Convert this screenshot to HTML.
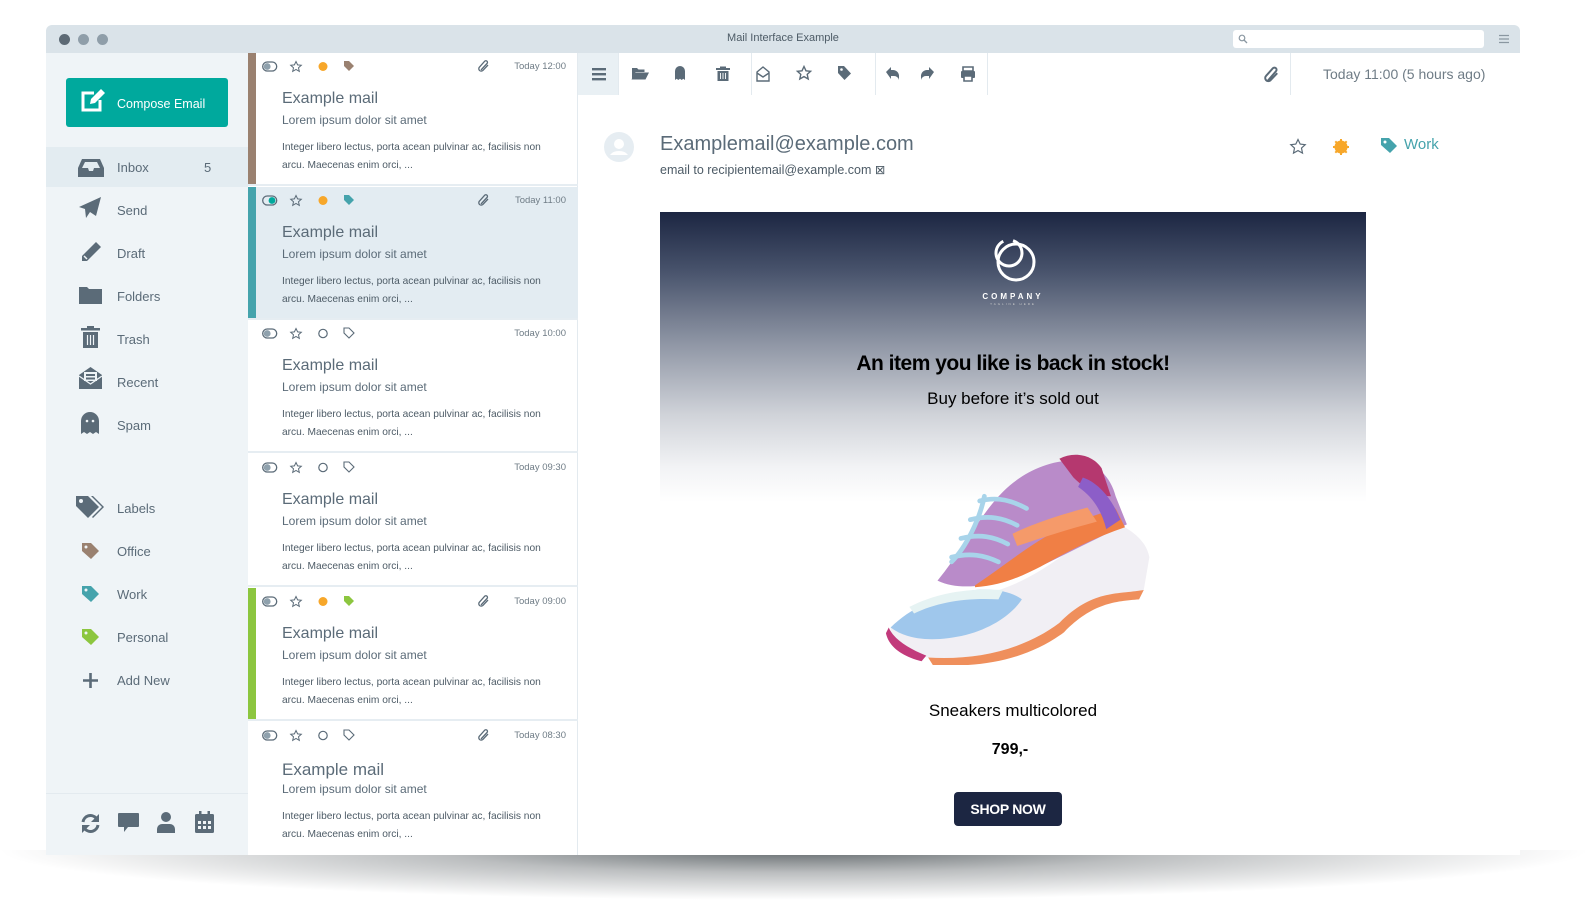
<!DOCTYPE html>
<html><head><meta charset="utf-8"><style>
*{box-sizing:border-box;margin:0;padding:0}
body{width:1588px;height:920px;background:#fff;position:relative;overflow:hidden;font-family:"Liberation Sans",sans-serif;color:#5b6b78}
.abs{position:absolute}
.shadow{position:absolute;left:0;top:850px;width:1588px;height:50px;background:radial-gradient(ellipse 50% 100% at 50% 0%,rgba(70,78,82,.85) 0%,rgba(120,125,128,.5) 45%,rgba(255,255,255,0) 100%)}
.win{position:absolute;left:46px;top:25px;width:1474px;height:830px;background:#fff;overflow:hidden;border-radius:6px 6px 0 0}
.title{position:absolute;left:0;top:0;width:1474px;height:28px;background:#dae3e9}
.dot{position:absolute;top:9px;width:11px;height:11px;border-radius:50%}
.side{position:absolute;left:0;top:28px;width:202px;height:802px;background:#eff4f7}
.nav{position:absolute;left:71px;font-size:13px;color:#5b6b78}
.ico{position:absolute}
.list{position:absolute;left:202px;top:28px;width:330px;height:802px;background:#fff;border-right:1px solid #e3eaef}
.item{position:absolute;left:0;width:330px;height:133px;border-bottom:2px solid #e6edf2}
.bar{position:absolute;left:0;top:0;width:8px;height:100%}
.item .t{position:absolute;left:34px;top:37px;font-size:16px;color:#5b6b78}
.item .s{position:absolute;left:34px;top:60px;font-size:12px;color:#5b6b78}
.item .b{position:absolute;left:34px;top:86px;font-size:10.2px;line-height:18px;color:#4d5b66;width:270px}
.item .tm{position:absolute;right:12px;top:8px;font-size:9.5px;color:#6f7c86}
.read{position:absolute;left:532px;top:28px;width:942px;height:802px;background:#fff}
.tb{position:absolute;top:0;height:42px;border-right:1px solid #e3eaef}
</style></head><body>
<div class="shadow"></div>
<div class="win">
 <div class="title">
  <div class="dot" style="left:13px;background:#5d6a75"></div>
  <div class="dot" style="left:32px;background:#8f9ea9"></div>
  <div class="dot" style="left:51px;background:#8f9ea9"></div>
  <div class="abs" style="left:0;width:1474px;top:7px;text-align:center;font-size:11px;color:#4d5b66">Mail Interface Example</div>
  <div class="abs" style="left:1187px;top:5px;width:251px;height:18px;background:#fff;border-radius:3px"></div>
  <svg class="abs" style="left:1192px;top:9px" width="10" height="10"><circle cx="4" cy="4" r="2.8" fill="none" stroke="#8a97a1" stroke-width="1.2"/><path d="M6 6l3 3" stroke="#8a97a1" stroke-width="1.3"/></svg>
  <svg class="abs" style="left:1453px;top:9px" width="10" height="10"><path d="M0 1.5h10M0 5h10M0 8.5h10" stroke="#8a97a1" stroke-width="1.3"/></svg>
 </div>
 <div class="side">
  <div class="abs" style="left:20px;top:25px;width:162px;height:49px;background:#00a99d;border-radius:3px"></div>
  <svg class="abs" style="left:34px;top:35px" width="26" height="26" viewBox="0 0 26 26"><path d="M14 5H3v17h17V12" fill="none" stroke="#fff" stroke-width="3"/><path d="M10 16l1-5L21 1l4 4-10 10z" fill="#fff"/></svg>
  <div class="abs" style="left:71px;top:44px;font-size:12.5px;color:#fff">Compose Email</div>
  <div class="abs" style="left:0;top:94px;width:202px;height:40px;background:#e3ecf1"></div>
  <svg class="ico" style="left:32px;top:106px" width="26" height="18" viewBox="0 0 26 18"><path d="M4 0h18l4 9v9H0V9z" fill="#5b6b78"/><path d="M4 9l3-6h12l3 6h-6l-1 3h-4l-1-3z" fill="#e3ecf1"/></svg>
  <div class="nav" style="top:107px">Inbox</div><div class="nav" style="left:158px;top:107px">5</div>
  <svg class="ico" style="left:33px;top:144px" width="22" height="22" viewBox="0 0 22 22"><path d="M22 0L0 10l6 2 1 9 4-6 6 4z" fill="#5b6b78"/></svg>
  <div class="nav" style="top:150px">Send</div>
  <svg class="ico" style="left:34px;top:188px" width="22" height="22" viewBox="0 0 22 22"><path d="M16 1l5 5L7 20H2v-5z" fill="#5b6b78"/><path d="M4 15l3 3" stroke="#eff4f7" stroke-width="1.5"/></svg>
  <div class="nav" style="top:193px">Draft</div>
  <svg class="ico" style="left:33px;top:233px" width="23" height="18" viewBox="0 0 23 18"><path d="M0 1h8l2 2h13v15H0z" fill="#5b6b78"/></svg>
  <div class="nav" style="top:236px">Folders</div>
  <svg class="ico" style="left:35px;top:273px" width="19" height="22" viewBox="0 0 19 22"><rect x="0" y="2" width="19" height="2.5" fill="#5b6b78"/><rect x="6" y="0" width="7" height="2" fill="#5b6b78"/><path d="M2 6h15v16H2z" fill="#5b6b78"/><path d="M6.5 9v10M9.5 9v10M12.5 9v10" stroke="#eff4f7" stroke-width="1.2"/></svg>
  <div class="nav" style="top:279px">Trash</div>
  <svg class="ico" style="left:33px;top:314px" width="23" height="22" viewBox="0 0 23 22"><path d="M0 8L11.5 0 23 8v14H0z" fill="#5b6b78"/><rect x="5" y="5" width="13" height="9" fill="#eff4f7"/><rect x="7" y="7" width="9" height="2" fill="#5b6b78"/><rect x="7" y="10.5" width="9" height="2" fill="#5b6b78"/><path d="M0 9l11.5 8L23 9" fill="none" stroke="#eff4f7" stroke-width="1.3"/></svg>
  <div class="nav" style="top:322px">Recent</div>
  <svg class="ico" style="left:35px;top:359px" width="18" height="22" viewBox="0 0 18 22"><path d="M0 9a9 9 0 0118 0v13l-3-2-3 2-3-2-3 2-3-2-3 2z" fill="#5b6b78"/><circle cx="6" cy="9" r="1.3" fill="#eff4f7"/><circle cx="12" cy="9" r="1.3" fill="#eff4f7"/></svg>
  <div class="nav" style="top:365px">Spam</div>
  <svg class="ico" style="left:30px;top:443px" width="29" height="25" viewBox="0 0 29 25"><path d="M0 0h12l11 11-11 11L0 10z" fill="#5b6b78"/><circle cx="5" cy="5" r="2" fill="#eff4f7"/><path d="M15 0h2l11 11-11 11-1-1 10-10z" fill="#5b6b78"/></svg>
  <div class="nav" style="top:448px">Labels</div>
  <svg class="ico" style="left:36px;top:490px" width="18" height="17" viewBox="0 0 18 17"><path d="M0 0h9l8 8-8 8-9-8z" fill="#9a8170"/><circle cx="4" cy="4" r="1.5" fill="#eff4f7"/></svg>
  <div class="nav" style="top:491px">Office</div>
  <svg class="ico" style="left:36px;top:533px" width="18" height="17" viewBox="0 0 18 17"><path d="M0 0h9l8 8-8 8-9-8z" fill="#45a3ac"/><circle cx="4" cy="4" r="1.5" fill="#eff4f7"/></svg>
  <div class="nav" style="top:534px">Work</div>
  <svg class="ico" style="left:36px;top:576px" width="18" height="17" viewBox="0 0 18 17"><path d="M0 0h9l8 8-8 8-9-8z" fill="#8cc63f"/><circle cx="4" cy="4" r="1.5" fill="#eff4f7"/></svg>
  <div class="nav" style="top:577px">Personal</div>
  <svg class="ico" style="left:37px;top:620px" width="15" height="15"><path d="M7.5 0v15M0 7.5h15" stroke="#5b6b78" stroke-width="2.6"/></svg>
  <div class="nav" style="top:620px">Add New</div>
  <div class="abs" style="left:0;top:740px;width:202px;height:1px;background:#e3eaef"></div>
  <svg class="ico" style="left:34px;top:760px" width="21" height="21" viewBox="0 0 21 21"><path d="M3 9a7.5 7.5 0 0113-4" fill="none" stroke="#5b6b78" stroke-width="3"/><path d="M19 1v8h-8z" fill="#5b6b78"/><path d="M18 12a7.5 7.5 0 01-13 4" fill="none" stroke="#5b6b78" stroke-width="3"/><path d="M2 20v-8h8z" fill="#5b6b78"/></svg>
  <svg class="ico" style="left:72px;top:760px" width="21" height="20" viewBox="0 0 21 20"><path d="M1 0h19a1 1 0 011 1v12a1 1 0 01-1 1H10l-4 5v-5H1a1 1 0 01-1-1V1a1 1 0 011-1z" fill="#5b6b78"/></svg>
  <svg class="ico" style="left:111px;top:759px" width="18" height="21" viewBox="0 0 18 21"><circle cx="9" cy="5" r="5" fill="#5b6b78"/><path d="M0 21v-4a5 5 0 015-5h8a5 5 0 015 5v4z" fill="#5b6b78"/></svg>
  <svg class="ico" style="left:149px;top:758px" width="19" height="22" viewBox="0 0 19 22"><rect x="0" y="3" width="19" height="19" rx="1.5" fill="#5b6b78"/><rect x="4" y="0" width="2.5" height="5" fill="#5b6b78"/><rect x="12.5" y="0" width="2.5" height="5" fill="#5b6b78"/><g fill="#eff4f7"><rect x="3" y="10" width="3" height="3"/><rect x="8" y="10" width="3" height="3"/><rect x="13" y="10" width="3" height="3"/><rect x="3" y="15" width="3" height="3"/><rect x="8" y="15" width="3" height="3"/><rect x="13" y="15" width="3" height="3"/></g></svg>
 </div>

 <div class="list">
  <div class="item" style="top:0"><div class="bar" style="background:#9a8170"></div>
   <svg class="abs" style="left:14px;top:7px" width="120" height="14" viewBox="0 0 120 14"><rect x="0.7" y="2" width="14" height="9" rx="4.5" fill="none" stroke="#5b6b78" stroke-width="1.3"/><circle cx="5.2" cy="6.5" r="3.4" fill="#8fa1ad"/><path d="M34 1.5l1.6 3.4 3.7.4-2.8 2.5.8 3.6-3.3-1.9-3.3 1.9.8-3.6-2.8-2.5 3.7-.4z" fill="none" stroke="#5b6b78" stroke-width="1"/><circle cx="61" cy="6.5" r="4.5" fill="#f7a72a"/><path d="M82 1h5l5 5-5 5-5-5z" fill="#9a8170"/></svg>
   <svg class="abs" style="left:230px;top:7px" width="12" height="12" viewBox="0 0 12 12"><path d="M3 10L9 3.5a1.6 1.6 0 00-2.3-2.3L1.5 7a2.4 2.4 0 003.4 3.4L10 5" fill="none" stroke="#5b6b78" stroke-width="1.3"/></svg>
   <div class="tm">Today 12:00</div><div class="t">Example mail</div><div class="s">Lorem ipsum dolor sit amet</div><div class="b">Integer libero lectus, porta acean pulvinar ac, facilisis non arcu. Maecenas enim orci, ...</div></div>

  <div class="item" style="top:134px;background:#e3ecf2;height:133px"><div class="bar" style="background:#45a3ac"></div>
   <svg class="abs" style="left:14px;top:7px" width="120" height="14" viewBox="0 0 120 14"><rect x="0.7" y="2" width="14" height="9" rx="4.5" fill="none" stroke="#5b6b78" stroke-width="1.3"/><circle cx="10" cy="6.5" r="3.4" fill="#00a99d"/><path d="M34 1.5l1.6 3.4 3.7.4-2.8 2.5.8 3.6-3.3-1.9-3.3 1.9.8-3.6-2.8-2.5 3.7-.4z" fill="none" stroke="#5b6b78" stroke-width="1"/><circle cx="61" cy="6.5" r="4.5" fill="#f7a72a"/><path d="M82 1h5l5 5-5 5-5-5z" fill="#45a3ac"/></svg>
   <svg class="abs" style="left:230px;top:7px" width="12" height="12" viewBox="0 0 12 12"><path d="M3 10L9 3.5a1.6 1.6 0 00-2.3-2.3L1.5 7a2.4 2.4 0 003.4 3.4L10 5" fill="none" stroke="#5b6b78" stroke-width="1.3"/></svg>
   <div class="tm">Today 11:00</div><div class="t">Example mail</div><div class="s">Lorem ipsum dolor sit amet</div><div class="b">Integer libero lectus, porta acean pulvinar ac, facilisis non arcu. Maecenas enim orci, ...</div></div>

  <div class="item" style="top:267px">
   <svg class="abs" style="left:14px;top:7px" width="120" height="14" viewBox="0 0 120 14"><rect x="0.7" y="2" width="14" height="9" rx="4.5" fill="none" stroke="#5b6b78" stroke-width="1.3"/><circle cx="5.2" cy="6.5" r="3.4" fill="#8fa1ad"/><path d="M34 1.5l1.6 3.4 3.7.4-2.8 2.5.8 3.6-3.3-1.9-3.3 1.9.8-3.6-2.8-2.5 3.7-.4z" fill="none" stroke="#5b6b78" stroke-width="1"/><circle cx="61" cy="6.5" r="4.2" fill="none" stroke="#5b6b78" stroke-width="1.2"/><path d="M82 1h5l5 5-5 5-5-5z" fill="none" stroke="#5b6b78" stroke-width="1.1"/></svg>
   <div class="tm">Today 10:00</div><div class="t">Example mail</div><div class="s">Lorem ipsum dolor sit amet</div><div class="b">Integer libero lectus, porta acean pulvinar ac, facilisis non arcu. Maecenas enim orci, ...</div></div>

  <div class="item" style="top:401px">
   <svg class="abs" style="left:14px;top:7px" width="120" height="14" viewBox="0 0 120 14"><rect x="0.7" y="2" width="14" height="9" rx="4.5" fill="none" stroke="#5b6b78" stroke-width="1.3"/><circle cx="5.2" cy="6.5" r="3.4" fill="#8fa1ad"/><path d="M34 1.5l1.6 3.4 3.7.4-2.8 2.5.8 3.6-3.3-1.9-3.3 1.9.8-3.6-2.8-2.5 3.7-.4z" fill="none" stroke="#5b6b78" stroke-width="1"/><circle cx="61" cy="6.5" r="4.2" fill="none" stroke="#5b6b78" stroke-width="1.2"/><path d="M82 1h5l5 5-5 5-5-5z" fill="none" stroke="#5b6b78" stroke-width="1.1"/></svg>
   <div class="tm">Today 09:30</div><div class="t">Example mail</div><div class="s">Lorem ipsum dolor sit amet</div><div class="b">Integer libero lectus, porta acean pulvinar ac, facilisis non arcu. Maecenas enim orci, ...</div></div>

  <div class="item" style="top:535px"><div class="bar" style="background:#8cc63f"></div>
   <svg class="abs" style="left:14px;top:7px" width="120" height="14" viewBox="0 0 120 14"><rect x="0.7" y="2" width="14" height="9" rx="4.5" fill="none" stroke="#5b6b78" stroke-width="1.3"/><circle cx="5.2" cy="6.5" r="3.4" fill="#8fa1ad"/><path d="M34 1.5l1.6 3.4 3.7.4-2.8 2.5.8 3.6-3.3-1.9-3.3 1.9.8-3.6-2.8-2.5 3.7-.4z" fill="none" stroke="#5b6b78" stroke-width="1"/><circle cx="61" cy="6.5" r="4.5" fill="#f7a72a"/><path d="M82 1h5l5 5-5 5-5-5z" fill="#8cc63f"/></svg>
   <svg class="abs" style="left:230px;top:7px" width="12" height="12" viewBox="0 0 12 12"><path d="M3 10L9 3.5a1.6 1.6 0 00-2.3-2.3L1.5 7a2.4 2.4 0 003.4 3.4L10 5" fill="none" stroke="#5b6b78" stroke-width="1.3"/></svg>
   <div class="tm">Today 09:00</div><div class="t">Example mail</div><div class="s">Lorem ipsum dolor sit amet</div><div class="b">Integer libero lectus, porta acean pulvinar ac, facilisis non arcu. Maecenas enim orci, ...</div></div>

  <div class="item" style="top:669px;border-bottom:none">
   <svg class="abs" style="left:14px;top:7px" width="120" height="14" viewBox="0 0 120 14"><rect x="0.7" y="2" width="14" height="9" rx="4.5" fill="none" stroke="#5b6b78" stroke-width="1.3"/><circle cx="5.2" cy="6.5" r="3.4" fill="#8fa1ad"/><path d="M34 1.5l1.6 3.4 3.7.4-2.8 2.5.8 3.6-3.3-1.9-3.3 1.9.8-3.6-2.8-2.5 3.7-.4z" fill="none" stroke="#5b6b78" stroke-width="1"/><circle cx="61" cy="6.5" r="4.2" fill="none" stroke="#5b6b78" stroke-width="1.2"/><path d="M82 1h5l5 5-5 5-5-5z" fill="none" stroke="#5b6b78" stroke-width="1.1"/></svg>
   <svg class="abs" style="left:230px;top:7px" width="12" height="12" viewBox="0 0 12 12"><path d="M3 10L9 3.5a1.6 1.6 0 00-2.3-2.3L1.5 7a2.4 2.4 0 003.4 3.4L10 5" fill="none" stroke="#5b6b78" stroke-width="1.3"/></svg>
   <div class="tm">Today 08:30</div><div class="t" style="top:38px;font-size:17px">Example mail</div><div class="s">Lorem ipsum dolor sit amet</div><div class="b">Integer libero lectus, porta acean pulvinar ac, facilisis non arcu. Maecenas enim orci, ...</div></div>
 </div>

 <div class="read">
  <div class="tb" style="left:0;width:41px;background:#e9f0f4"></div>
  <div class="tb" style="left:41px;width:133px"></div>
  <div class="tb" style="left:174px;width:124px"></div>
  <div class="tb" style="left:298px;width:112px"></div>
  <div class="tb" style="left:410px;width:303px"></div>
  <svg class="abs" style="left:0;top:0" width="420" height="42" viewBox="0 0 420 42">
   <g fill="#5b6b78">
    <rect x="14" y="15" width="14" height="2.4"/><rect x="14" y="20" width="14" height="2.4"/><rect x="14" y="25" width="14" height="2.4"/>
    <path d="M54 15h5l1.5 1.5h6V19h-9l-3.5 7z"/><path d="M57 19.5h14l-3.5 7H53.5z"/>
    <path d="M97 27V18a5 5 0 0110 0v9l-1.7-1.3-1.6 1.3-1.7-1.3-1.7 1.3-1.6-1.3z"/>
    <rect x="138" y="15" width="14" height="2"/><rect x="142" y="13.5" width="6" height="1.5"/><path d="M139.5 18h11v10h-11z"/>
   </g>
   <path d="M142.5 20v6M145 20v6M147.5 20v6" stroke="#fff" stroke-width=".9"/>
   <path d="M179 19l6-5 6 5v9h-12z" fill="none" stroke="#5b6b78" stroke-width="1.4"/><path d="M179 20l6 4 6-4" fill="none" stroke="#5b6b78" stroke-width="1.4"/>
   <path d="M226 13.5l2 4.3 4.6.5-3.4 3.1 1 4.6-4.2-2.4-4.2 2.4 1-4.6-3.4-3.1 4.6-.5z" fill="none" stroke="#5b6b78" stroke-width="1.4"/>
   <path d="M260 13h6l7 7.5-6.5 6.5-6.5-7z" fill="#5b6b78"/><circle cx="263.5" cy="16.5" r="1.3" fill="#fff"/>
   <path d="M308 19l5-5v3h2a6 6 0 016 6v4a5 5 0 00-5-4h-3v3z" fill="#5b6b78"/>
   <path d="M356 19l-5-5v3h-2a6 6 0 00-6 6v4a5 5 0 015-4h3v3z" fill="#5b6b78"/>
   <path d="M385 14h10v4h-10z" fill="none" stroke="#5b6b78" stroke-width="1.6"/><rect x="383" y="18" width="14" height="7" rx="1" fill="#5b6b78"/><path d="M386 23h8v5h-8z" fill="#fff" stroke="#5b6b78" stroke-width="1.6"/>
  </svg>
  <svg class="abs" style="left:686px;top:13px" width="16" height="17" viewBox="0 0 12 13"><path d="M3 11L9 4a1.6 1.6 0 00-2.3-2.3L1.5 7.5a2.4 2.4 0 003.4 3.4L10 5.5" fill="none" stroke="#5b6b78" stroke-width="1.5"/></svg>
  <div class="abs" style="left:745px;top:13px;font-size:14px;color:#6f7c86">Today 11:00 (5 hours ago)</div>

  <svg class="abs" style="left:26px;top:79px" width="30" height="30" viewBox="0 0 30 30"><circle cx="15" cy="15" r="15" fill="#e6edf2"/><circle cx="15" cy="12" r="5" fill="#fff"/><path d="M6 23a10 7 0 0118 0z" fill="#fff"/></svg>
  <div class="abs" style="left:82px;top:80px;font-size:20px;color:#5b6b78">Examplemail@example.com</div>
  <div class="abs" style="left:82px;top:109px;font-size:12.5px;color:#4d5b66">email to recipientemail@example.com ⊠</div>
  <svg class="abs" style="left:711px;top:85px" width="18" height="18" viewBox="0 0 18 18"><path d="M9 1.5l2.2 4.6 5 .6-3.7 3.4 1 5-4.5-2.5-4.5 2.5 1-5L1.8 6.7l5-.6z" fill="none" stroke="#5b6b78" stroke-width="1.2"/></svg>
  <svg class="abs" style="left:754px;top:85px" width="18" height="18" viewBox="0 0 18 18"><circle cx="9" cy="9" r="6.5" fill="#f7a72a"/><g stroke="#f7a72a" stroke-width="2"><path d="M9 1v16M1 9h16M3.3 3.3l11.4 11.4M14.7 3.3L3.3 14.7"/></g></svg>
  <svg class="abs" style="left:802px;top:84px" width="18" height="18" viewBox="0 0 18 18"><path d="M1 1h8l8 8-7 7-9-8z" fill="#45a3ac"/><circle cx="5" cy="5" r="1.5" fill="#fff"/></svg>
  <div class="abs" style="left:826px;top:83px;font-size:15px;color:#45a3ac">Work</div>

  <div class="abs" style="left:82px;top:159px;width:706px;height:640px;overflow:hidden;background:linear-gradient(to bottom,#1c2642 0%,#47526b 20%,#8e95a4 45%,#d0d3d9 70%,#f2f3f5 88%,#fff 100%);background-size:100% 290px;background-repeat:no-repeat">
   <svg class="abs" style="left:326px;top:22px" width="55" height="50" viewBox="0 0 55 50"><circle cx="30" cy="28" r="18" fill="none" stroke="#fff" stroke-width="3"/><circle cx="23" cy="19" r="13" fill="none" stroke="#fff" stroke-width="3" stroke-dasharray="55 10"/></svg>
   <div class="abs" style="left:0;width:706px;text-align:center;top:80px;font-size:8px;font-weight:bold;letter-spacing:3px;color:#fff">COMPANY</div>
   <div class="abs" style="left:0;width:706px;text-align:center;top:90px;font-size:3px;letter-spacing:2px;color:#ccc">TAGLINE HERE</div>
   <div class="abs" style="left:0;width:706px;text-align:center;top:140px;font-size:21px;font-weight:bold;color:#000;letter-spacing:-.5px">An item you like is back in stock!</div>
   <div class="abs" style="left:0;width:706px;text-align:center;top:177px;font-size:17px;color:#000">Buy before it’s sold out</div>
   <svg class="abs" style="left:205px;top:228px" width="295" height="225" viewBox="0 0 300 240">
    <path d="M20 200C60 175 120 170 160 150C200 130 225 105 255 85C275 95 292 105 296 125L290 160C260 165 235 160 200 195C160 225 110 235 60 232C35 230 20 220 20 200z" fill="#f1eff4"/>
    <path d="M60 232c50 3 100-7 140-37 35-35 60-30 90-35l-5 10c-25 2-50 4-80 35-40 30-90 38-140 35z" fill="#ef8f5c"/>
    <path d="M70 150C95 120 115 80 140 55C160 35 190 20 220 22C240 24 255 40 260 60L272 90C250 100 230 110 210 120C180 135 150 150 120 155C100 157 85 157 70 150z" fill="#b98bc9"/>
    <path d="M200 20c15-8 35-5 45 10l10 30c-15 0-30-10-40-20z" fill="#b5386f"/>
    <path d="M110 155c30-20 60-45 90-60 20-10 40-15 60-22l10 20c-30 10-60 25-90 42-20 10-40 20-70 22z" fill="#f07f45"/>
    <path d="M150 100c20-10 50-20 80-28l10 15c-30 8-55 16-85 26z" fill="#f59a6a"/>
    <path d="M225 40c15 5 30 20 40 45l-15 10c-5-20-15-35-30-45z" fill="#8c5ec8"/>
    <path d="M20 200C40 180 70 165 110 160C130 158 150 162 160 170C150 185 130 200 100 208C70 215 40 215 20 200z" fill="#9fc7ec"/>
    <path d="M40 178c30-15 60-20 100-18l-5 10c-35-2-65 3-90 15z" fill="#e6f3f3"/>
    <path d="M18 200c5 12 20 22 40 30l-5 6c-20-5-35-15-38-30z" fill="#c23a7b"/>
    <g stroke="#a8d4ea" stroke-width="5" stroke-linecap="round" fill="none"><path d="M115 65c20-5 35 0 50 8"/><path d="M105 85c20-5 35-2 50 6"/><path d="M95 105c20-5 35-2 50 6"/><path d="M85 125c20-5 35-2 50 5"/><path d="M120 60c-5 25-20 55-35 70"/></g>
   </svg>
   <div class="abs" style="left:0;width:706px;text-align:center;top:489px;font-size:17px;color:#000">Sneakers multicolored</div>
   <div class="abs" style="left:0;width:700px;text-align:center;top:529px;font-size:16px;font-weight:bold;color:#000">799,-</div>
   <div class="abs" style="left:294px;top:580px;width:108px;height:34px;background:#1c2642;border-radius:4px;color:#fff;font-size:14px;font-weight:bold;text-align:center;line-height:34px;letter-spacing:-.3px">SHOP NOW</div>
  </div>
 </div>
</div>
</body></html>
